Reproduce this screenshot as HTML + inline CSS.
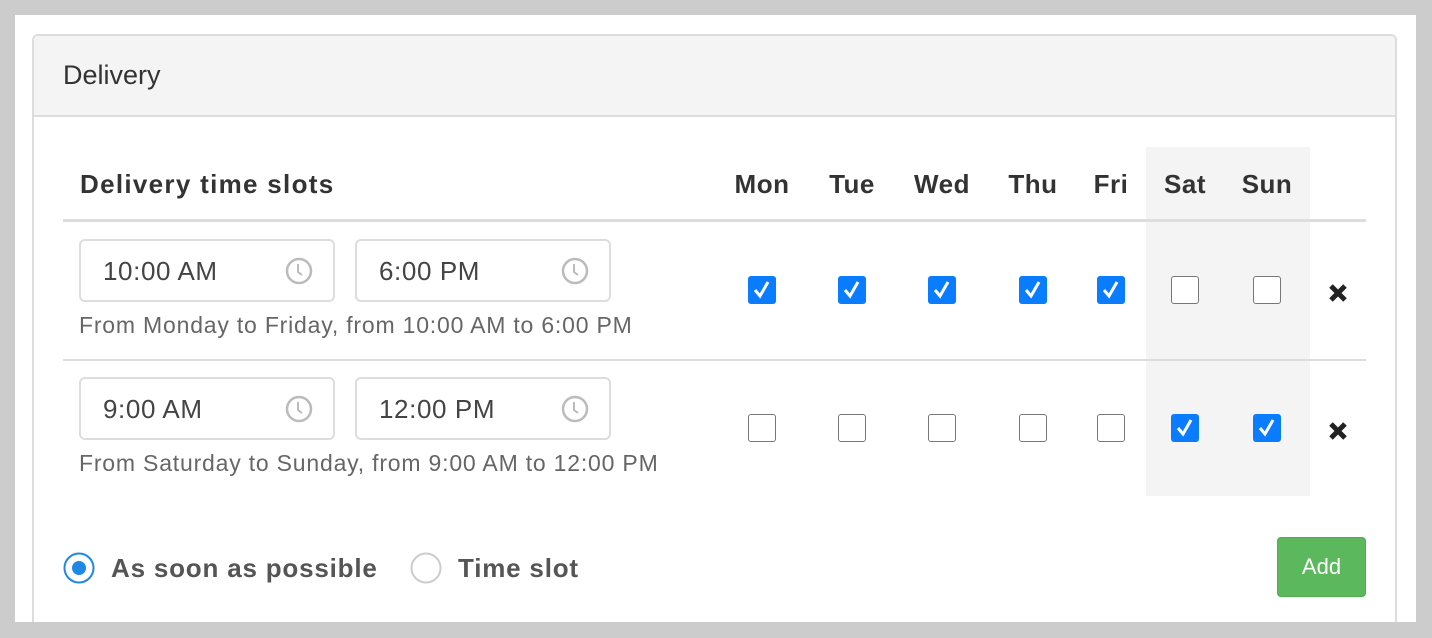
<!DOCTYPE html>
<html><head><style>
html,body{margin:0;width:1432px;height:638px;overflow:hidden}
body{background:#ccc;font-family:"Liberation Sans",sans-serif;position:relative}
.a{position:absolute}
.inp{position:absolute;height:63px;border:2px solid #ddd;border-radius:6px;box-sizing:border-box;background:#fff;font-size:26px;letter-spacing:0.6px;color:#444;line-height:61px;padding-left:22px}
.inp svg{position:absolute;right:20px;top:16px}
.cb{position:absolute;width:28px;height:28px;border-radius:3px;box-sizing:border-box}
.on{background:#0a7cff}
.off{border:1.5px solid #777;background:#fff}
.day{position:absolute;top:169px;font-weight:bold;font-size:26px;letter-spacing:0.5px;color:#333;transform:translateX(-50%)}
.help{position:absolute;font-size:23px;letter-spacing:0.8px;color:#666;left:79px}
</style></head><body>
<div class="a" style="left:15px;top:15px;width:1401px;height:607px;background:#fff;overflow:hidden">
<div class="a" style="left:17px;top:19px;width:1365px;height:620px;border:2px solid #ddd;border-radius:6px;box-sizing:border-box;background:#fff"></div>
</div>
<div class="a" style="left:34px;top:36px;width:1361px;height:79px;background:#f4f4f4;border-bottom:2px solid #ddd;border-radius:4px 4px 0 0"></div>
<div class="a" style="left:63px;top:60px;font-size:27px;color:#333">Delivery</div>
<div class="a" style="left:1146px;top:147px;width:164px;height:349px;background:#f4f4f4"></div>
<div class="a" style="left:80px;top:169px;font-size:26px;font-weight:bold;letter-spacing:1.3px;color:#333">Delivery time slots</div>
<div class="day" style="left:762px">Mon</div>
<div class="day" style="left:852px">Tue</div>
<div class="day" style="left:942px">Wed</div>
<div class="day" style="left:1033px">Thu</div>
<div class="day" style="left:1111px">Fri</div>
<div class="day" style="left:1185px">Sat</div>
<div class="day" style="left:1267px">Sun</div>
<div class="a" style="left:63px;top:219px;width:1303px;height:3px;background:#ddd"></div>
<div class="a" style="left:63px;top:359px;width:1303px;height:2px;background:#ddd"></div>

<div class="inp" style="left:79px;top:239px;width:256px">10:00 AM<svg width="28" height="28" viewBox="0 0 28 28"><circle cx="14" cy="14" r="12" fill="none" stroke="#bbb" stroke-width="2.5"/><path d="M13 7v8l4 3" fill="none" stroke="#bbb" stroke-width="2"/></svg></div>
<div class="inp" style="left:355px;top:239px;width:256px">6:00 PM<svg width="28" height="28" viewBox="0 0 28 28"><circle cx="14" cy="14" r="12" fill="none" stroke="#bbb" stroke-width="2.5"/><path d="M13 7v8l4 3" fill="none" stroke="#bbb" stroke-width="2"/></svg></div>
<div class="help" style="top:312px">From Monday to Friday, from 10:00 AM to 6:00 PM</div>
<div class="inp" style="left:79px;top:377px;width:256px">9:00 AM<svg width="28" height="28" viewBox="0 0 28 28"><circle cx="14" cy="14" r="12" fill="none" stroke="#bbb" stroke-width="2.5"/><path d="M13 7v8l4 3" fill="none" stroke="#bbb" stroke-width="2"/></svg></div>
<div class="inp" style="left:355px;top:377px;width:256px">12:00 PM<svg width="28" height="28" viewBox="0 0 28 28"><circle cx="14" cy="14" r="12" fill="none" stroke="#bbb" stroke-width="2.5"/><path d="M13 7v8l4 3" fill="none" stroke="#bbb" stroke-width="2"/></svg></div>
<div class="help" style="top:450px">From Saturday to Sunday, from 9:00 AM to 12:00 PM</div>

<div class="cb on" style="left:748px;top:276px"><svg width="28" height="28"><path d="M7 14l5 6 8-14" fill="none" stroke="#fff" stroke-width="3"/></svg></div>
<div class="cb on" style="left:838px;top:276px"><svg width="28" height="28"><path d="M7 14l5 6 8-14" fill="none" stroke="#fff" stroke-width="3"/></svg></div>
<div class="cb on" style="left:928px;top:276px"><svg width="28" height="28"><path d="M7 14l5 6 8-14" fill="none" stroke="#fff" stroke-width="3"/></svg></div>
<div class="cb on" style="left:1019px;top:276px"><svg width="28" height="28"><path d="M7 14l5 6 8-14" fill="none" stroke="#fff" stroke-width="3"/></svg></div>
<div class="cb on" style="left:1097px;top:276px"><svg width="28" height="28"><path d="M7 14l5 6 8-14" fill="none" stroke="#fff" stroke-width="3"/></svg></div>
<div class="cb off" style="left:1171px;top:276px"></div>
<div class="cb off" style="left:1253px;top:276px"></div>
<svg class="a" style="left:1328px;top:283px" width="20" height="20"><path d="M3 3l14 14M17 3L3 17" stroke="#222" stroke-width="5"/></svg>
<div class="cb off" style="left:748px;top:414px"></div>
<div class="cb off" style="left:838px;top:414px"></div>
<div class="cb off" style="left:928px;top:414px"></div>
<div class="cb off" style="left:1019px;top:414px"></div>
<div class="cb off" style="left:1097px;top:414px"></div>
<div class="cb on" style="left:1171px;top:414px"><svg width="28" height="28"><path d="M7 14l5 6 8-14" fill="none" stroke="#fff" stroke-width="3"/></svg></div>
<div class="cb on" style="left:1253px;top:414px"><svg width="28" height="28"><path d="M7 14l5 6 8-14" fill="none" stroke="#fff" stroke-width="3"/></svg></div>
<svg class="a" style="left:1328px;top:421px" width="20" height="20"><path d="M3 3l14 14M17 3L3 17" stroke="#222" stroke-width="5"/></svg>

<svg class="a" style="left:63px;top:552px" width="34" height="34"><circle cx="16" cy="16" r="14.5" fill="#fff" stroke="#1e88e5" stroke-width="2"/><circle cx="16" cy="16" r="7" fill="#1e88e5"/></svg>
<div class="a" style="left:111px;top:553px;font-size:26px;font-weight:bold;letter-spacing:0.8px;color:#555">As soon as possible</div>
<svg class="a" style="left:410px;top:552px" width="34" height="34"><circle cx="16" cy="16" r="14.5" fill="#fff" stroke="#ccc" stroke-width="2"/></svg>
<div class="a" style="left:458px;top:553px;font-size:26px;font-weight:bold;letter-spacing:0.8px;color:#555">Time slot</div>
<div class="a" style="left:1277px;top:537px;width:89px;height:60px;background:#5cb85c;border:1px solid #4cae4c;box-sizing:border-box;border-radius:4px;color:#fff;font-size:22px;text-align:center;line-height:58px">Add</div>
</body></html>
